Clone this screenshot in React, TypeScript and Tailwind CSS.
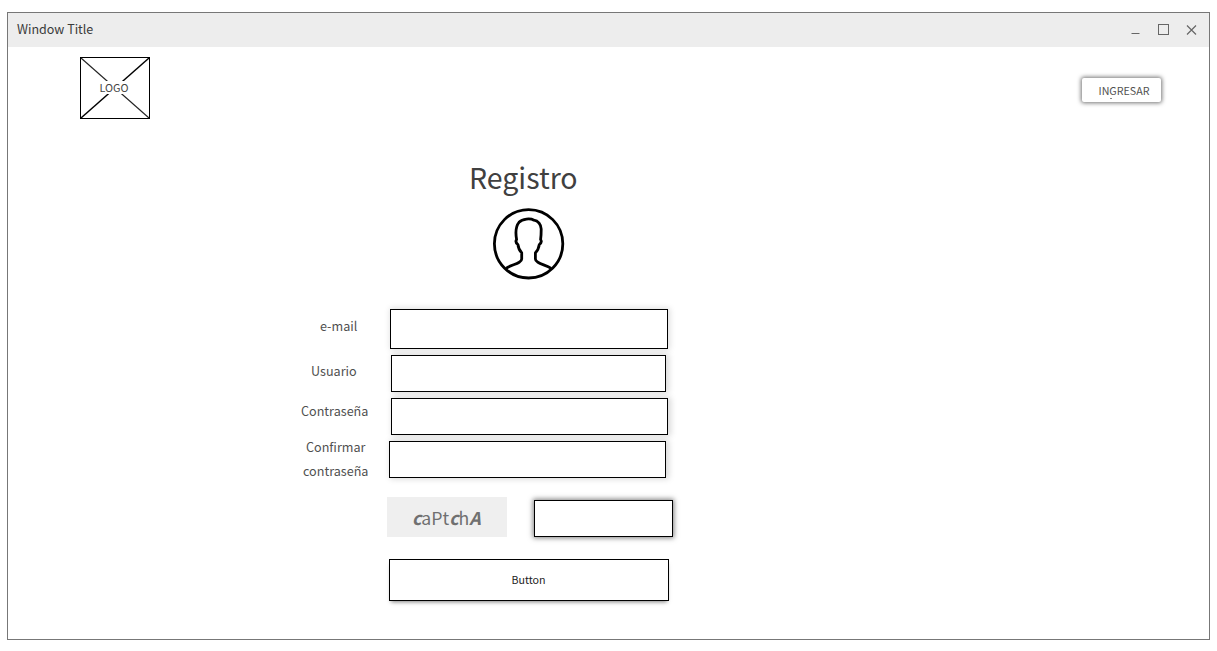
import React from "react";

function TitleBar() {
  return (
    <header className="flex h-[34px] items-center justify-between bg-[#ededed] pl-[9px] pr-[12px]">
      <span className="-mt-[2px] text-[12.5px] leading-5 text-[#3a3a3a]">Window Title</span>
      <svg width="66" height="14" viewBox="0 0 66 14" fill="none" stroke="#666">
        <path d="M0.500 10.500H8.500" />
        <rect x="27.500" y="1.500" width="10" height="10" />
        <path d="M56 2.500L65 11.500M65 2.500L56 11.500" strokeWidth="1.200" />
      </svg>
    </header>
  );
}

function Logo() {
  return (
    <div className="grid h-[62px] w-[70px] place-items-center">
      <svg className="col-start-1 row-start-1" width="70" height="62" fill="none" stroke="#000">
        <rect x="0.5" y="0.5" width="69" height="61" />
        <path d="M1 1L69 61" strokeWidth="1.1" stroke="#222" />
        <path d="M69 1L1 61" strokeWidth="1.5" />
      </svg>
      <span className="col-start-1 row-start-1 mb-[2px] mr-[2px] bg-white text-[10.800px] leading-[13px] text-[#444]">LOGO</span>
    </div>
  );
}

function Avatar() {
  return (
    <svg width="72" height="72" viewBox="0 0 72 72" fill="none" stroke="#000" strokeWidth="2.8" strokeLinejoin="round">
      <circle cx="35.600" cy="35.800" r="34.200" />
      <path d="M13 60.300C18.500 56.500 28.700 55.500 28.700 51V44.700C26.300 42.500 25.300 40 24.900 36.500C23 35 22.600 33 23.600 31.500C22.800 27 22.500 18.500 26 14.300C29.500 10.500 37.500 10.200 41 12.200C45 12.500 48.200 17 48.200 21C48.200 25 48.100 28 47.600 31.500C48.700 33 48.200 35 46.300 36.500C45.800 40 44.800 42.500 42.400 44.700V51C42.400 55.500 52.500 56.500 58.200 60.300" />
    </svg>
  );
}

export default function App() {
  return (
    <div className="h-[651px] w-[1217px] bg-white pl-[7px] pt-3 font-['Noto_Sans_CJK_SC',sans-serif] text-[#505050]">
      <div className="h-[628px] w-[1203px] border border-[#777]">
        <TitleBar />
        <main>
          <div className="flex items-start justify-between pl-[72px] pr-[48px] pt-[10px]">
            <Logo />
            <button className="mt-[21px] flex h-[24px] w-[79px] justify-center rounded-[2px] bg-white pl-[5px] text-[10.700px] leading-[26px] shadow-[0_0_4px_1px_rgba(0,0,0,0.55)]">
              <span className="relative">
                INGRESAR
                <i className="absolute left-[11px] top-[20px] h-px w-[2px] bg-[#888]" />
              </span>
            </button>
          </div>
          <h1 className="ml-[461px] mt-[36px] h-[44px] text-[28.500px] leading-[44px] text-[#404040]">Registro</h1>
          <div className="ml-[485px] mt-[9px]">
            <Avatar />
          </div>
          <form className="mt-[29px]">
            <label className="flex h-[40px]">
              <span className="w-[349px] whitespace-nowrap pl-[312px] text-[12.600px] leading-[34px]">e-mail</span>
              <input className="ml-[33px] h-[40px] w-[278px] border border-black bg-white shadow-[1px_0_6px_1px_rgba(0,0,0,0.13)]" />
            </label>
            <label className="mt-[6px] flex h-[37px]">
              <span className="w-[349px] pl-[303px] text-[12.600px] leading-[32px]">Usuario</span>
              <input className="ml-[34px] h-[37px] w-[275px] border border-black bg-white shadow-[2px_0_6px_1px_rgba(0,0,0,0.15)]" />
            </label>
            <label className="mt-[6px] flex h-[37px]">
              <span className="w-[361px] pl-[293px] text-[12.600px] leading-[26px]">Contraseña</span>
              <input className="ml-[22px] h-[37px] w-[277px] border border-black bg-white shadow-[2px_0_6px_1px_rgba(0,0,0,0.15)]" />
            </label>
            <label className="mt-[6px] flex h-[37px]">
              <span className="-mt-[6px] w-[361px] pl-[295px] text-[12.600px] leading-[24px]">
                <span className="block pl-[3px]">Confirmar</span>
                <span className="block">contraseña</span>
              </span>
              <input className="ml-[20px] h-[37px] w-[277px] border border-black bg-white shadow-[2px_0_6px_1px_rgba(0,0,0,0.15)]" />
            </label>
            <div className="mt-[19px] flex h-[41px] pl-[379px]">
              <div className="h-[40px] w-[120px] bg-[#efefef] pl-[25px] text-[17.700px] leading-[41px] text-[#707070]">
                <b><i>c</i></b>aPt<b><i>c</i></b>h<b><i>A</i></b>
              </div>
              <input className="ml-[27px] mt-[3px] h-[37px] w-[139px] border border-black bg-white shadow-[0_0_5px_1px_rgba(0,0,0,0.5)]" />
            </div>
            <button className="ml-[381px] mt-[21px] block h-[42px] w-[280px] border border-black bg-white pr-[1px] text-[10.700px] leading-[40px] text-[#222] shadow-[0_3px_4px_-2px_rgba(0,0,0,0.5)]">
              Button
            </button>
          </form>
        </main>
      </div>
    </div>
  );
}
